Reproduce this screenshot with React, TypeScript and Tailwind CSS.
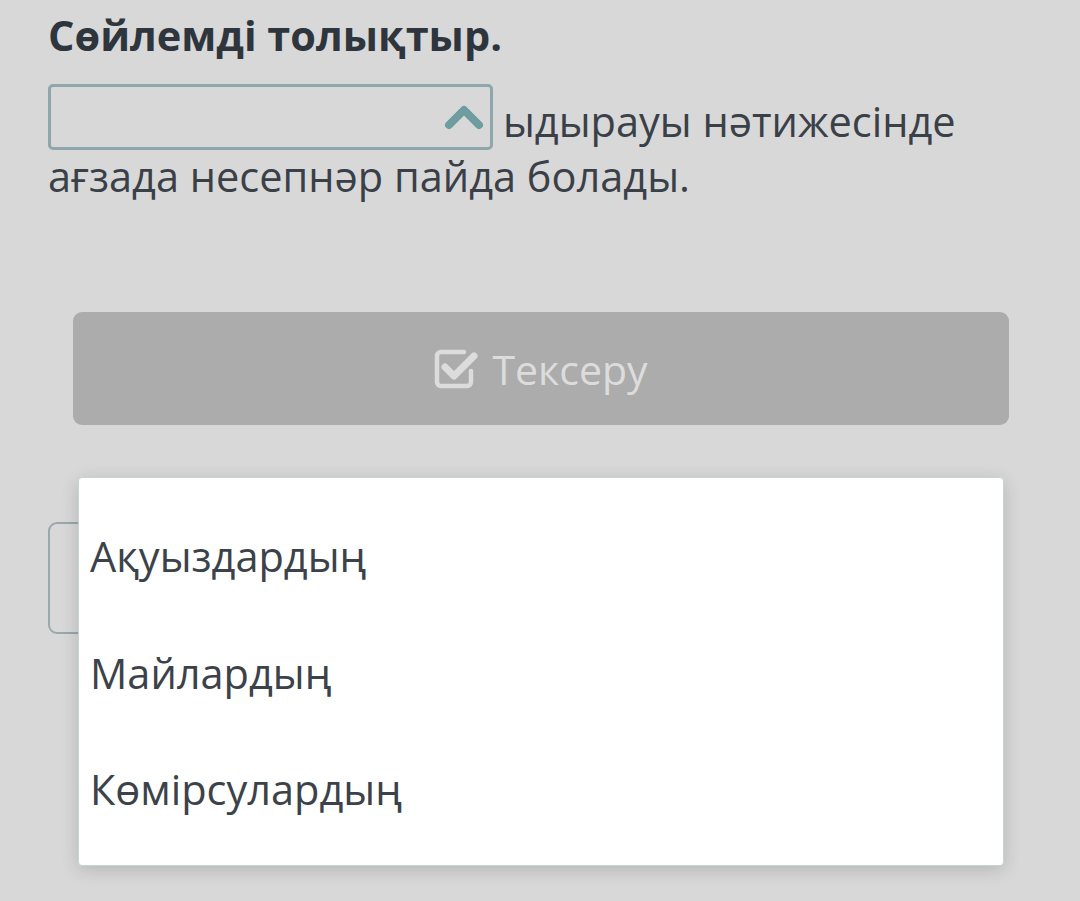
import React from "react";

function CheckSquare() {
  return (
    <svg width="46" height="40" viewBox="0 0 46 40" fill="none">
      <path
        d="M30 3 H7 a4 4 0 0 0 -4 4 V33 a4 4 0 0 0 4 4 H33 a4 4 0 0 0 4 -4 V22"
        stroke="#dcdcdc"
        strokeWidth="4.5"
        strokeLinecap="round"
        strokeLinejoin="round"
      />
      <path
        d="M11 18 L20 27 L40 7"
        stroke="#dcdcdc"
        strokeWidth="7"
        strokeLinecap="round"
        strokeLinejoin="round"
      />
    </svg>
  );
}

function ChevronUp() {
  return (
    <svg width="40" height="26" viewBox="0 0 40 26" fill="none">
      <path d="M5 21 L20 6 L35 21" stroke="#6e9c9f" strokeWidth="8" strokeLinecap="round" strokeLinejoin="round" />
    </svg>
  );
}

export default function App() {
  return (
    <div
      className="relative h-[901px] w-full overflow-hidden bg-[#d8d8d8] pl-[48px] pt-[10px]"
      style={{ fontFamily: '"Open Sans", "Noto Sans", sans-serif' }}
    >
      <h1 className="text-[41.5px] font-bold leading-[50px] text-[#2e353d]">Сөйлемді толықтыр.</h1>

      <div className="mt-[24px] flex items-end">
        <div className="flex h-[66px] w-[445px] shrink-0 items-center justify-end rounded-[5px] border-[3px] border-[#8fa6ac] pr-[6px]">
          <ChevronUp />
        </div>
        <span className="ml-[10px] whitespace-nowrap text-[41.5px] leading-[57px] text-[#3a4047]">ыдырауы нәтижесінде</span>
      </div>
      <div className="whitespace-nowrap text-[41.5px] leading-[52px] text-[#3a4047]">ағзада несепнәр пайда болады.</div>

      <div className="ml-[25px] mt-[110px] flex h-[113px] w-[936px] items-center justify-center gap-[12px] rounded-[9px] bg-[#acacac]">
        <CheckSquare />
        <span className="text-[41px] leading-[56px] text-[#dcdcdc]">Тексеру</span>
      </div>

      <div className="mt-[97px] h-[112px] w-[940px] rounded-[9px] border-2 border-[#9aa7ab]" />

      <div className="absolute left-[78px] top-[477px] w-[926px] rounded-[4px] border border-[#c6d4d7] bg-white pb-[17px] pt-[20px] shadow-[0_4px_18px_rgba(0,0,0,0.16)]">
        {["Ақуыздардың", "Майлардың", "Көмірсулардың"].map((t) => (
          <div key={t} className="flex h-[116.5px] items-center pl-[11px] text-[41.5px] leading-[56px] text-[#3c4249]">
            {t}
          </div>
        ))}
      </div>
    </div>
  );
}
